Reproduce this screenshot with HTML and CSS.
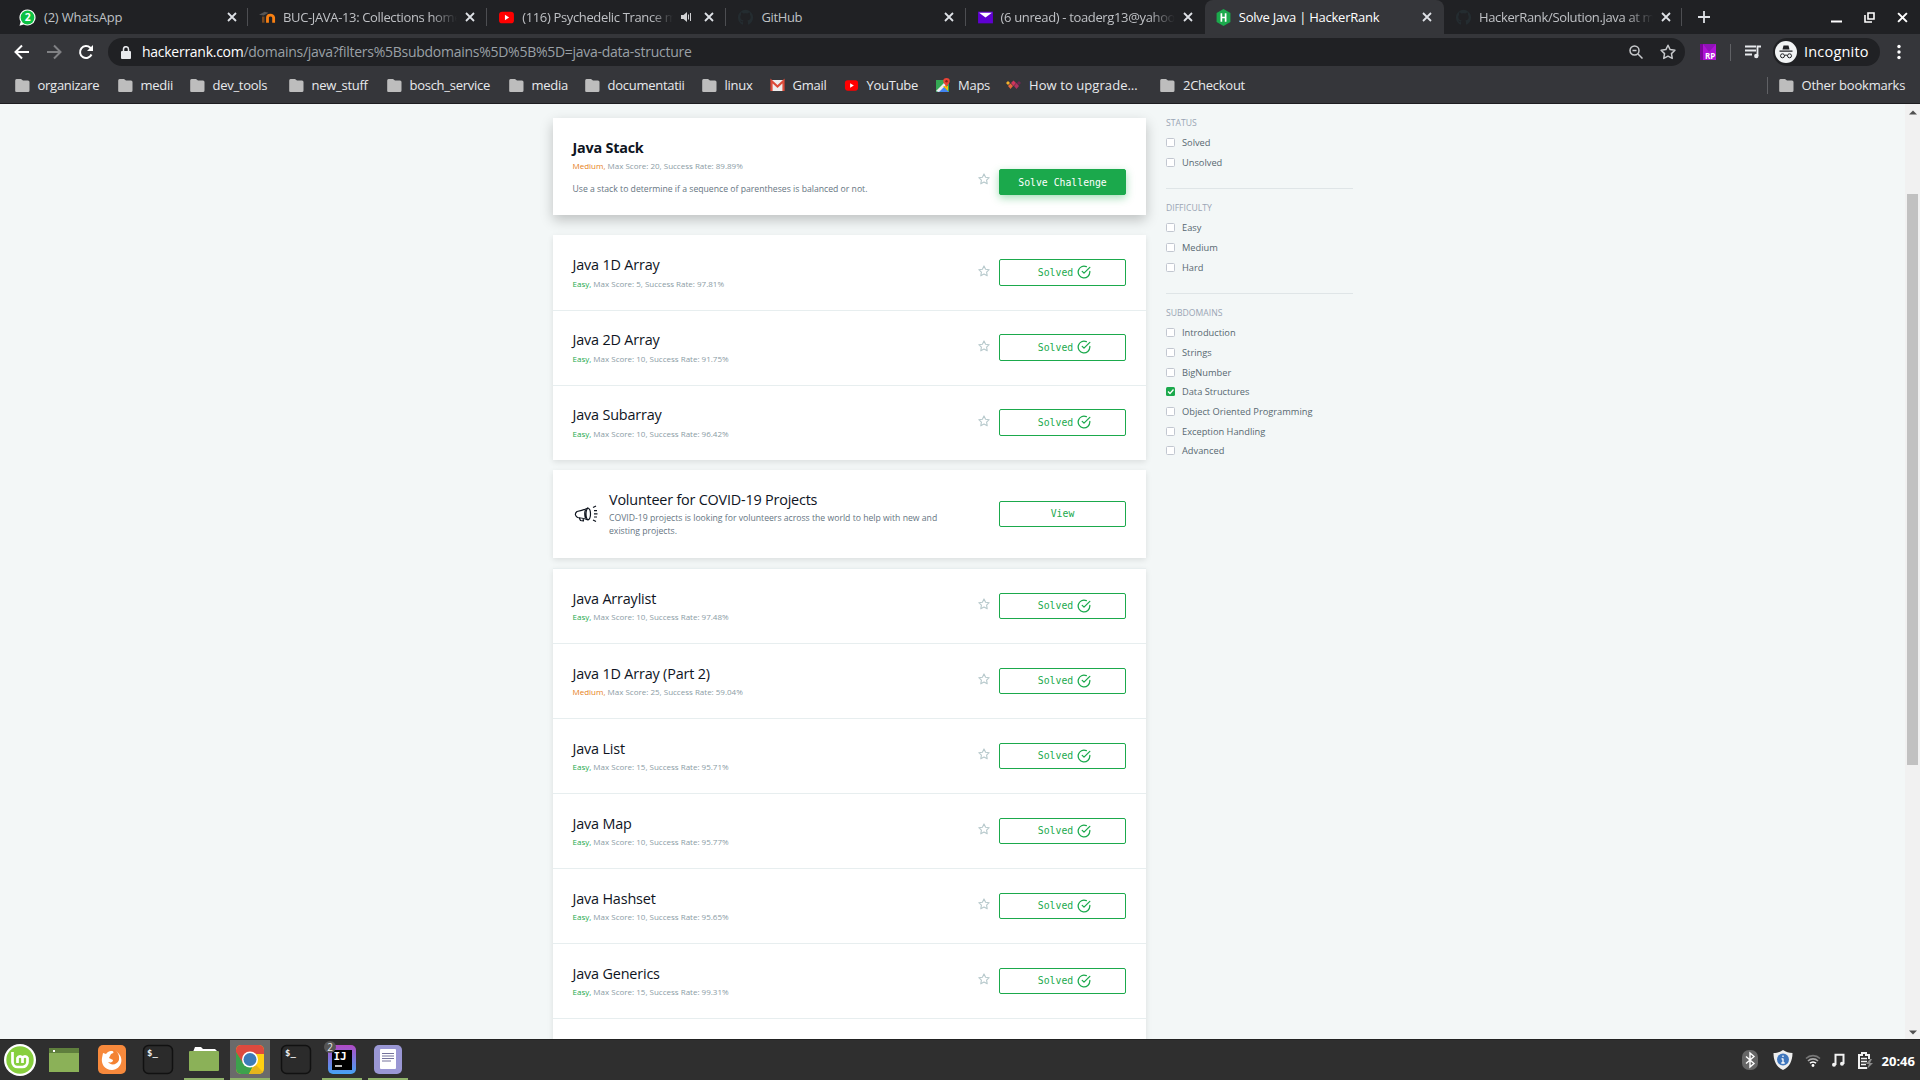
FILE: index.html
```
<!DOCTYPE html>
<html lang="en">
<head>
<meta charset="utf-8">
<title>Solve Java | HackerRank</title>
<link rel="stylesheet" href="styles.css">
</head>
<body>
<svg class="defs" width="0" height="0" aria-hidden="true">
  <symbol id="close" viewBox="0 0 10 10"><path d="M1 1l8 8M9 1l-8 8" fill="none" stroke="currentColor" stroke-width="1.8"/></symbol>
  <symbol id="folder" viewBox="0 0 15 15"><path d="M1.500 1h4.500l2 1.500h5a1.500 1.500 0 0 1 1.500 1.500v8.500a1.500 1.500 0 0 1-1.500 1.500h-11.500a1.300 1.300 0 0 1-1.300-1.500v-10a1.500 1.500 0 0 1 1.300-1.500z" fill="#bdbdbd"/></symbol>
  <symbol id="youtube" viewBox="0 0 16 16"><rect x="1" y="2.500" width="14" height="11" rx="3" fill="#f00"/><path d="M6.500 5.500v5l4-2.500z" fill="#fff"/></symbol>
  <symbol id="github" viewBox="0 0 16 16"><path d="M8 .8a7.200 7.200 0 0 0-2.300 14v-2.500c-2 .4-2.400-.8-2.800-1.500 1.100 0 1.600 1.400 2.900 1 .1-.5.300-.8.500-1-2-.3-3.200-1.200-3.200-3.500 0-.9.300-1.500.8-2-.2-.7-.1-1.400.1-2 .8 0 1.500.5 2 .9a7 7 0 0 1 4 0c.5-.4 1.200-.9 2-.9.200.6.300 1.300.1 2 .5.500.8 1.100.8 2 0 2.300-1.200 3.200-3.200 3.500.4.400.6 1 .6 1.800v2.200a7.200 7.200 0 0 0-2.300-14z" fill="#242c30"/></symbol>
  <symbol id="star" viewBox="0 0 12 12"><path d="M6 .9l1.600 3.300 3.600.5-2.600 2.500.6 3.600-3.200-1.700-3.200 1.700.6-3.600-2.600-2.500 3.600-.5z" fill="none" stroke="currentColor" stroke-width="1.100" stroke-linejoin="round"/></symbol>
  <symbol id="check" viewBox="0 0 24 24"><path d="M22 11v1a10 10 0 1 1-6-9.100M22 4L12 14l-3-3" fill="none" stroke="currentColor" stroke-width="2.200" stroke-linecap="round" stroke-linejoin="round"/></symbol>
</svg>

<header class="browser">
  <div class="tabs">
    <div class="tab tab-first"><svg class="fav" viewBox="0 0 18 18"><path d="M9 .5a8.500 8.500 0 1 1-4 16l-4.500 1.200 1.300-4.200A8.500 8.500 0 0 1 9 .5z" fill="#fff"/><circle cx="9" cy="9" r="7.300" fill="#0dc143"/><text x="9" y="13" text-anchor="middle" class="fav-num">2</text></svg><span class="name">(2) WhatsApp</span><svg class="x"><use href="#close"/></svg></div>
    <div class="tab"><svg class="fav" viewBox="0 0 18 18"><path d="M4.500 14.500V8" fill="none" stroke="#7a4a20" stroke-width="2.600"/><path d="M9 14.500V9q0-2.500 3-2.500T15.500 9v5.500" fill="none" stroke="#f98012" stroke-width="3"/><path d="M0 6l6-3 4 1-5 3z" fill="#555"/></svg><span class="name fade">BUC-JAVA-13: Collections homework</span><svg class="x"><use href="#close"/></svg></div>
    <div class="tab"><svg class="fav"><use href="#youtube"/></svg><span class="name fade">(116) Psychedelic Trance mix</span><svg class="sound" viewBox="0 0 12 12"><path d="M0 4h2.500L6 1v10L2.500 8H0z" fill="#d0d1d3"/><path d="M7.500 3.500v5M9.500 2v8" stroke="#d0d1d3"/></svg><svg class="x"><use href="#close"/></svg></div>
    <div class="tab"><svg class="fav"><use href="#github"/></svg><span class="name">GitHub</span><svg class="x"><use href="#close"/></svg></div>
    <div class="tab"><svg class="fav" viewBox="0 0 16 16"><path d="M1 2.500h14v11H1z" fill="#5f01d1"/><path d="M2 3.500h12L8 8z" fill="#fff"/></svg><span class="name fade">(6 unread) - toaderg13@yahoo.com</span><svg class="x"><use href="#close"/></svg></div>
    <div class="tab active"><svg class="fav" viewBox="0 0 16 16"><path d="M8 0l6.500 3.700v8.600L8 16l-6.500-3.700V3.700z" fill="#1ba94c"/><path d="M6 4v8M10 4v8M6 8h4" stroke="#fff" stroke-width="1.600"/></svg><span class="name">Solve Java | HackerRank</span><svg class="x"><use href="#close"/></svg></div>
    <div class="tab last"><svg class="fav"><use href="#github"/></svg><span class="name fade">HackerRank/Solution.java at master</span><svg class="x"><use href="#close"/></svg></div>
    <svg class="plus" viewBox="0 0 12 12"><path d="M6 0v12M0 6h12" stroke="#dee1e6" stroke-width="1.800"/></svg>
    <div class="window-buttons">
      <svg viewBox="0 0 11 11"><path d="M0 9.500h11" stroke="#fff" stroke-width="2"/></svg>
      <svg viewBox="0 0 11 11"><path d="M4 1h6v6H4zM1 3v7h7" fill="none" stroke="#fff" stroke-width="1.600"/></svg>
      <svg viewBox="0 0 10 10"><use href="#close"/></svg>
    </div>
  </div>
  <div class="toolbar">
    <svg class="nav" viewBox="0 0 16 16"><path d="M15 8H2M8 1.500L1.500 8 8 14.500" fill="none" stroke="#fff" stroke-width="2"/></svg>
    <svg class="nav" viewBox="0 0 16 16"><path d="M1 8h13M8 1.500L14.500 8 8 14.500" fill="none" stroke="#808184" stroke-width="2"/></svg>
    <svg class="nav" viewBox="0 0 16 16"><path d="M13.500 10.500A6 6 0 1 1 12.300 3.800L14 5.500" fill="none" stroke="#fff" stroke-width="2"/><path d="M15 1v6H9z" fill="#fff"/></svg>
    <div class="omnibox">
      <svg class="lock" viewBox="0 0 10 13"><path d="M1 5h8a1 1 0 0 1 1 1v6a1 1 0 0 1-1 1H1a1 1 0 0 1-1-1V6a1 1 0 0 1 1-1z" fill="#e8eaed"/><path d="M2.500 5V3.200a2.500 2.500 0 0 1 5 0V5" fill="none" stroke="#e8eaed" stroke-width="1.500"/></svg>
      <span class="url"><b>hackerrank.com</b>/domains/java?filters%5Bsubdomains%5D%5B%5D=java-data-structure</span>
      <svg class="lens" viewBox="0 0 14 14"><circle cx="5.500" cy="5.500" r="4.500" fill="none" stroke="#c8cacd" stroke-width="1.500"/><path d="M9 9l4.500 4.500M3.500 5.500h4" stroke="#c8cacd" stroke-width="1.500"/></svg>
      <svg class="bookmark"><use href="#star"/></svg>
    </div>
    <svg class="rp" viewBox="0 0 16 16"><path d="M0 0h16v16H0z" fill="#b012d6"/><path d="M0 0h3v16H0z" fill="#7a0699"/><path d="M3 0h13L9 8z" fill="#9013b8"/><text x="5" y="14.500" class="rp-text">RP</text></svg>
    <i class="bar"></i>
    <svg class="queue" viewBox="0 0 16 14"><path d="M0 1.500h11M0 5.500h11M0 9.500h7M12.500 11V1.500H16" fill="none" stroke="#e8eaed" stroke-width="1.800"/><circle cx="11.300" cy="11" r="2.200" fill="#e8eaed"/></svg>
    <div class="incognito"><svg viewBox="0 0 22 22"><circle cx="11" cy="11" r="11" fill="#f1f3f4"/><path d="M7.500 8.500l1-4h5l1 4zM4.500 9.500h13v1.200h-13z" fill="#202124"/><path d="M9.500 14.500q1.500-1 3 0" fill="none" stroke="#202124"/><circle cx="7.500" cy="14.800" r="2" fill="none" stroke="#202124"/><circle cx="14.500" cy="14.800" r="2" fill="none" stroke="#202124"/></svg><span>Incognito</span></div>
    <svg class="dots" viewBox="0 0 4 16"><circle cx="2" cy="2.500" r="1.700"/><circle cx="2" cy="8" r="1.700"/><circle cx="2" cy="13.500" r="1.700"/></svg>
  </div>
  <nav class="bookmarks">
    <span class="bm b1"><svg><use href="#folder"/></svg>organizare</span>
    <span class="bm b2"><svg><use href="#folder"/></svg>medii</span>
    <span class="bm b3"><svg><use href="#folder"/></svg>dev_tools</span>
    <span class="bm b4"><svg><use href="#folder"/></svg>new_stuff</span>
    <span class="bm b5"><svg><use href="#folder"/></svg>bosch_service</span>
    <span class="bm b6"><svg><use href="#folder"/></svg>media</span>
    <span class="bm b7"><svg><use href="#folder"/></svg>documentatii</span>
    <span class="bm b8"><svg><use href="#folder"/></svg>linux</span>
    <span class="bm b9"><svg viewBox="0 0 15 15"><path d="M1 2h13v11H1z" fill="#eee"/><path d="M1.500 13V3l6 5.500L13.500 3v10" fill="none" stroke="#dd4b39" stroke-width="2.200"/></svg>Gmail</span>
    <span class="bm b10"><svg><use href="#youtube"/></svg>YouTube</span>
    <span class="bm b11"><svg viewBox="0 0 15 15"><path d="M1 2h13v12H1z" fill="#34a853"/><path d="M2 14l6-6 6 6z" fill="#4285f4"/><path d="M1 13L12 2l2 2L4 14z" fill="#eee"/><path d="M8 8l5 5V8z" fill="#fbbc04"/><path d="M11.500 0a3.300 3.300 0 0 1 3.300 3.300c0 2-2.300 3-3.300 6-1-3-3.300-4-3.300-6A3.300 3.300 0 0 1 11.500 0z" fill="#ea4335"/><circle cx="11.500" cy="3.300" r="1.200" fill="#8b1e16"/></svg>Maps</span>
    <span class="bm b12"><svg viewBox="0 0 15 15"><path d="M0 5l2-2 2 2-2 2z" fill="#f4b02a"/><path d="M2 8l2.500-2.500L7 8l-2.500 3z" fill="#e9663a"/><path d="M5 5l2.500-2.500L10 5 7.500 8z" fill="#d3345c"/><path d="M8 8l2.500-3L13 8l-2.500 3z" fill="#b0315f"/><path d="M11 5l2-2 2 2-2 2z" fill="#702552"/></svg>How to upgrade…</span>
    <span class="bm b13"><svg><use href="#folder"/></svg>2Checkout</span>
    <i class="bar"></i>
    <span class="bm b14"><svg><use href="#folder"/></svg>Other bookmarks</span>
  </nav>
</header>

<div class="viewport">
<div class="page">
  <main class="challenges">
    <article class="card featured">
      <div class="info"><h2>Java Stack</h2><p class="meta"><em class="medium">Medium,</em> Max Score: 20, Success Rate: 89.89%</p><p class="desc">Use a stack to determine if a sequence of parentheses is balanced or not.</p></div>
      <svg class="star"><use href="#star"/></svg><a class="btn primary">Solve Challenge</a>
    </article>
    <section class="card list first">
      <article class="row"><div class="info"><h3>Java 1D Array</h3><p class="meta"><em>Easy,</em> Max Score: 5, Success Rate: 97.81%</p></div><svg class="star"><use href="#star"/></svg><a class="btn">Solved<svg><use href="#check"/></svg></a></article>
      <article class="row"><div class="info"><h3>Java 2D Array</h3><p class="meta"><em>Easy,</em> Max Score: 10, Success Rate: 91.75%</p></div><svg class="star"><use href="#star"/></svg><a class="btn">Solved<svg><use href="#check"/></svg></a></article>
      <article class="row"><div class="info"><h3>Java Subarray</h3><p class="meta"><em>Easy,</em> Max Score: 10, Success Rate: 96.42%</p></div><svg class="star"><use href="#star"/></svg><a class="btn">Solved<svg><use href="#check"/></svg></a></article>
    </section>
    <article class="card volunteer">
      <svg class="horn" viewBox="0 0 24 20"><path d="M3 7.500Q8 6.800 14 4q2.500 1 2.500 6T14 16q-4-2-10.500-2.500Q-.5 10.500 3 7.500zM11.500 5.500q-1.500 4.500 0 9M5 13.500l1.500 3 3 .5-.5-3M14 4q-2 1.500-2 6t2 6" fill="none" stroke="#0e141e" stroke-width="1.200" stroke-linejoin="round"/><path d="M19 3.500l3-1.500M20 6.700h3M20 9.900h3.500M20 13h3M19 16l3 1.500" stroke="#0e141e" stroke-width="1.200"/></svg>
      <div class="info"><h3>Volunteer for COVID-19 Projects</h3><p class="desc">COVID-19 projects is looking for volunteers across the world to help with new and<br>existing projects.</p></div>
      <a class="btn">View</a>
    </article>
    <section class="card list second">
      <article class="row"><div class="info"><h3>Java Arraylist</h3><p class="meta"><em>Easy,</em> Max Score: 10, Success Rate: 97.48%</p></div><svg class="star"><use href="#star"/></svg><a class="btn">Solved<svg><use href="#check"/></svg></a></article>
      <article class="row"><div class="info"><h3>Java 1D Array (Part 2)</h3><p class="meta"><em class="medium">Medium,</em> Max Score: 25, Success Rate: 59.04%</p></div><svg class="star"><use href="#star"/></svg><a class="btn">Solved<svg><use href="#check"/></svg></a></article>
      <article class="row"><div class="info"><h3>Java List</h3><p class="meta"><em>Easy,</em> Max Score: 15, Success Rate: 95.71%</p></div><svg class="star"><use href="#star"/></svg><a class="btn">Solved<svg><use href="#check"/></svg></a></article>
      <article class="row"><div class="info"><h3>Java Map</h3><p class="meta"><em>Easy,</em> Max Score: 10, Success Rate: 95.77%</p></div><svg class="star"><use href="#star"/></svg><a class="btn">Solved<svg><use href="#check"/></svg></a></article>
      <article class="row"><div class="info"><h3>Java Hashset</h3><p class="meta"><em>Easy,</em> Max Score: 10, Success Rate: 95.65%</p></div><svg class="star"><use href="#star"/></svg><a class="btn">Solved<svg><use href="#check"/></svg></a></article>
      <article class="row"><div class="info"><h3>Java Generics</h3><p class="meta"><em>Easy,</em> Max Score: 15, Success Rate: 99.31%</p></div><svg class="star"><use href="#star"/></svg><a class="btn">Solved<svg><use href="#check"/></svg></a></article>
      <article class="row"></article>
    </section>
  </main>
  <aside class="filters">
    <section><h4>STATUS</h4><label><i></i>Solved</label><label><i></i>Unsolved</label></section>
    <section><h4>DIFFICULTY</h4><label><i></i>Easy</label><label><i></i>Medium</label><label><i></i>Hard</label></section>
    <section><h4>SUBDOMAINS</h4><label><i></i>Introduction</label><label><i></i>Strings</label><label><i></i>BigNumber</label><label><i class="on"><svg viewBox="0 0 9 9"><path d="M2 4.500l2 2 3.500-4" fill="none" stroke="#fff" stroke-width="1.300"/></svg></i>Data Structures</label><label><i></i>Object Oriented Programming</label><label><i></i>Exception Handling</label><label><i></i>Advanced</label></section>
  </aside>
</div>
<div class="scrollbar"><svg viewBox="0 0 8 5"><path d="M0 4.500L4 .5l4 4z" fill="#505050"/></svg><div class="thumb"></div><svg viewBox="0 0 8 5"><path d="M0 .5l4 4 4-4z" fill="#505050"/></svg></div>
</div>

<footer class="taskbar">
  <div class="app a1"><svg viewBox="0 0 32 32"><circle cx="16" cy="16" r="16" fill="#fff"/><circle cx="16" cy="16" r="13.700" fill="#87cf3e"/><path d="M8.500 8v10a5 5 0 0 0 5 5h5a5 5 0 0 0 5-5v-4a2.700 2.700 0 0 0-5 0v5M18.500 14a2.700 2.700 0 0 0-5 0v5" fill="none" stroke="#fff" stroke-width="2.700"/></svg></div>
  <div class="app a2"><svg viewBox="0 0 32 32"><path d="M1 4h30v24H1z" fill="#8bb158"/><path d="M1 4h30v5H1z" fill="#5f7f3d"/><path d="M5 6h2v2H5z" fill="#fff"/></svg></div>
  <div class="app a3"><svg viewBox="0 0 32 32"><rect x="2" y="1" width="28" height="29" rx="5" fill="#f7893c"/><path d="M7 9l3 1c3-4 9-4 12-1 6 5 4 16-6 17-8 0-11-7-10-12z" fill="#fff"/><path d="M14 6c6-1 10 4 9 10-2 5-8 6-11 2 3 1 5 0 5-2l-4-2 2-4c4-1 3-3-1-4z" fill="#f48232"/></svg></div>
  <div class="app a4"><svg viewBox="0 0 32 32"><rect x="1.500" y="1.500" width="29" height="28" rx="5" fill="#2b2b2b" stroke="#111" stroke-width="1.500"/><text x="5" y="12" class="prompt">$_</text></svg></div>
  <div class="app a5 open"><svg viewBox="0 0 32 32"><path d="M5 8l2-5h6l2 2h12l2 2v6H5z" fill="#fff"/><rect x="1" y="7" width="30" height="20" rx="1" fill="#8bb158"/></svg></div>
  <div class="app a6 open current"><svg viewBox="0 0 32 32"><defs><clipPath id="tile"><rect x="2" y="1" width="28" height="29" rx="5"/></clipPath></defs><g clip-path="url(#tile)"><path d="M0 0h32v32H0z" fill="#ffcf12"/><path d="M2 0h30v10H16l-7 10L0 6z" fill="#dd4a3e"/><path d="M0 5l9 14 10 3-5 10H0z" fill="#3da14c"/><path d="M15 30l6-10 10 10z" fill="#e5b51c"/></g><circle cx="16" cy="15.500" r="8" fill="#fff"/><circle cx="16" cy="15.500" r="6.500" fill="#3d7cb8"/></svg></div>
  <div class="app a7"><svg viewBox="0 0 32 32"><rect x="1.500" y="1.500" width="29" height="28" rx="5" fill="#2b2b2b" stroke="#111" stroke-width="1.500"/><text x="5" y="12" class="prompt">$_</text></svg></div>
  <div class="app a8 open"><svg viewBox="0 0 32 32"><defs><linearGradient id="ij" x2="0" y2="1"><stop stop-color="#b14ac4"/><stop offset="1" stop-color="#45a3f5"/></linearGradient></defs><rect x="2" y="1" width="28" height="29" rx="5" fill="url(#ij)"/><path d="M6 6h20v20H6z" fill="#000"/><text x="7.500" y="16" class="ij">IJ</text><path d="M9 22h7" stroke="#fff" stroke-width="1.500"/></svg><b class="badge">2</b></div>
  <div class="app a9 open"><svg viewBox="0 0 32 32"><rect x="2" y="1" width="28" height="29" rx="5" fill="#9a97d4"/><rect x="8" y="5" width="16" height="20" rx="1" fill="#fff"/><path d="M10 9.500h12M10 12h12M10 14.500h12M10 17h9" stroke="#75739c"/></svg></div>
  <div class="tray">
    <svg class="bluetooth" viewBox="0 0 16 20"><rect width="16" height="20" rx="7" fill="#666"/><path d="M4 6.500l8 7-4 3.500V3l4 3.500-8 7" fill="none" stroke="#fff" stroke-width="1.400"/></svg>
    <svg class="shield" viewBox="0 0 20 20"><path d="M10 0c3 2 6 3 9.500 3 0 8-3 14-9.500 17C3.500 17 .5 11 .5 3 4 3 7 2 10 0z" fill="#eee"/><circle cx="10" cy="9.500" r="6" fill="#3f76bd"/><path d="M10 8.500v4.500M10 5.500v1.500M8.500 8.800H10M8.300 13h3.400" stroke="#fff" stroke-width="1.300"/></svg>
    <svg class="wifi" viewBox="0 0 16 14"><path d="M1 5.500a10 10 0 0 1 14 0" fill="none" stroke="#777" stroke-width="1.600"/><path d="M3 8a7 7 0 0 1 10 0" fill="none" stroke="#aaa" stroke-width="1.600"/><path d="M5 10.300a4 4 0 0 1 6 0" fill="none" stroke="#fff" stroke-width="1.600"/><circle cx="8" cy="12.500" r="1.400" fill="#fff"/></svg>
    <svg class="music" viewBox="0 0 14 14"><path d="M4.500 12V1.800h8V11" fill="none" stroke="#f2f2f2" stroke-width="2"/><circle cx="3" cy="11.800" r="2" fill="#f2f2f2"/><circle cx="11" cy="10.800" r="2" fill="#f2f2f2"/></svg>
    <svg class="battery" viewBox="0 0 15 17"><path d="M11 7V3H8V1H4v2H1v13h8" fill="none" stroke="#f2f2f2" stroke-width="2"/><path d="M3 6.500h6M3 9.500h6M3 12.500h5" stroke="#f2f2f2" stroke-width="1.500"/><path d="M12 7l-4 5h3l-2 5 6-6h-3l2-4z" fill="#8a8a8a"/></svg>
    <time>20:46</time>
  </div>
</footer>
</body>
</html>
```
FILE: styles.css
```
* { box-sizing: border-box; }
body { margin: 0; width: 1920px; height: 1080px; overflow: hidden; display: flex; flex-direction: column; font-family: "Open Sans", sans-serif; background: #f3f7f7; }
h2, h3, h4, p { margin: 0; }
svg { display: block; flex: none; }
.defs { position: absolute; }

.browser { height: 104px; background: #35363a; border-bottom: 1px solid #1d1d20; font-family: "Open Sans", sans-serif; color: #e8eaed; flex: none; }
.tabs { height: 34px; background: #202124; display: flex; }
.tab { width: 239.200px; height: 34px; flex: none; display: flex; align-items: center; padding: 0 12px 0 11px; color: #bfc1c5; font-size: 13px; letter-spacing: -.35px; background: linear-gradient(#4d4e52, #4d4e52) right 8px / 1px 18px no-repeat; }
.tab-first { width: 248px; padding: 0 11px 0 19px; letter-spacing: -.2px; }
.tab:nth-child(5), .tab.last { background-image: none; }
.tab.active { background: #35363a; color: #fff; border-radius: 8px 8px 0 0; letter-spacing: -.25px; }
.tab.last { width: 238px; padding-right: 11px; background: linear-gradient(#4d4e52, #4d4e52) right 8px / 1px 18px no-repeat; }
.fav { width: 17px; height: 17px; margin-right: 7px; }
.tab-first .fav { margin-right: 8px; }
.tab.active .fav { margin-left: -1px; }
.fav-num { font: bold 11px "Open Sans", sans-serif; fill: #fff; }
.name { flex: 1; min-width: 0; white-space: nowrap; overflow: hidden; }
.fade { -webkit-mask-image: linear-gradient(90deg, #000 85%, transparent); mask-image: linear-gradient(90deg, #000 85%, transparent); }
.x { width: 10px; height: 10px; margin-left: 8px; color: #dee1e6; }
.sound { width: 12px; height: 12px; margin: 0 3px 0 8px; }
.plus { width: 12px; height: 12px; margin: 11px 0 0 16px; }
.window-buttons { margin: 12px 12px 0 auto; display: flex; gap: 22px; color: #fff; }
.window-buttons svg { width: 11px; height: 11px; }

.toolbar { height: 36px; display: flex; align-items: center; padding: 0 15px 0 14px; }
.nav { width: 16px; height: 16px; margin-right: 16px; }
.omnibox { width: 1577px; height: 28px; margin-left: -2px; border-radius: 14px; background: #202124; display: flex; align-items: center; padding: 0 9px 0 13px; }
.lock { width: 10px; height: 13px; margin-right: 11px; }
.url { flex: 1; font-size: 14px; line-height: 18px; padding-bottom: 1px; color: #9aa0a6; letter-spacing: -.27px; white-space: nowrap; }
.url b { font-weight: 400; color: #fff; }
.lens { width: 14px; height: 14px; margin-right: 17px; }
.bookmark { width: 16px; height: 16px; color: #c8cacd; }
.rp { width: 16px; height: 16px; margin-left: 15px; }
.rp-text { font: bold 8px "Open Sans", sans-serif; fill: #fff; }
.bar { width: 1px; height: 17px; background: #606165; }
.toolbar .bar { margin: 0 14px; }
.queue { width: 16px; height: 14px; }
.incognito { width: 107px; height: 28px; margin-left: 12px; border-radius: 14px; background: #202124; display: flex; align-items: center; gap: 7px; padding-left: 2px; font-size: 14.500px; letter-spacing: .2px; line-height: 18px; color: #fff; }
.incognito span { padding-bottom: 1px; }
.incognito svg { width: 22px; height: 22px; }
.dots { width: 4px; height: 16px; margin-left: auto; margin-right: 4px; fill: #fff; }

.bookmarks { height: 30px; padding: 0 12px 0 14.500px; display: flex; align-items: center; font-size: 13px; letter-spacing: -.27px; white-space: nowrap; }
.bm { display: flex; align-items: center; gap: 8px; flex: none; }
.bm svg { width: 15px; height: 15px; }
.b1 { width: 103px; } .b2 { width: 72px; } .b3 { width: 99px; } .b4 { width: 98px; } .b5 { width: 122px; }
.b6 { width: 76px; } .b7 { width: 117px; } .b8 { width: 68px; } .b9 { width: 74px; } .b10 { width: 91.500px; }
.b11 { width: 71px; } .b12 { width: 154px; letter-spacing: .08px; } .b13 { width: 606.500px; }
.b14 { margin-left: 11px; letter-spacing: -.2px; }

.viewport { flex: 1; min-height: 0; display: flex; overflow: hidden; }
.page { flex: 1; min-width: 0; padding: 14px 0 0 553px; display: flex; gap: 20px; background: #f3f7f7; }
.challenges { width: 593px; flex: none; }
.card { background: #fff; box-shadow: 0 2px 6px rgba(0, 0, 0, .1); display: flex; }
.info { flex: 1; min-width: 0; }
.featured { height: 97px; padding: 20px 20px 0 19.500px; box-shadow: 0 5px 12px rgba(0, 0, 0, .22); }
h2 { font-size: 14.400px; line-height: 20px; color: #0e141e; letter-spacing: -.22px; }
h3 { font-size: 14.400px; line-height: 20px; font-weight: 400; color: #0e141e; letter-spacing: -.17px; }
.meta { font-size: 8px; line-height: 12px; margin-top: 2px; color: #8b9ca5; white-space: nowrap; }
.meta em { font-style: normal; color: #1ba94c; }
.meta em.medium { color: #e67f22; }
.desc { font-size: 8.660px; line-height: 13px; color: #667582; white-space: nowrap; }
.featured .desc { margin-top: 11px; }
.star { width: 12px; height: 12px; margin: 30px 9px 0 0; color: #b7c9cc; }
.featured .star { margin-top: 35px; }
.btn { width: 127px; height: 27px; border: 1px solid #1ba94c; border-radius: 2px; color: #1ba94c; display: flex; align-items: center; justify-content: center; gap: 4px; font: 9.800px "DejaVu Sans Mono", monospace; white-space: nowrap; }
.btn svg { width: 14px; height: 14px; }
.btn.primary { background: #1ba94c; color: #fff; height: 26px; margin-top: 31px; box-shadow: 0 3px 8px rgba(27, 169, 76, .4); }
.list { margin-top: 20px; flex-direction: column; }
.row { height: 75px; padding: 20px 20px 0 19.500px; display: flex; flex: none; border-top: 1px solid #e7eeef; }
.first .row { padding-top: 19px; }
.first .row:first-child { border-top-color: #fff; }
.row .btn { margin-top: 4px; height: 26px; padding: 0 0 1px 4px; }
.first .row .btn { height: 27px; }
.row .star { margin-top: 9px; }
.first .star { margin-top: 10px; }
.first .meta { margin-top: 3px; }
.volunteer { margin-top: 10px; height: 88px; padding: 20px 20px 0; }
.horn { width: 24px; height: 20px; margin: 14px 11px 0 1px; }
.volunteer .desc { padding-top: 2px; }
.volunteer h3 { letter-spacing: -.2px; }
.volunteer .btn { margin-top: 11px; height: 26px; padding-bottom: 1px; }
.second { margin-top: 10px; }

.filters { width: 187px; color: #576871; }
.filters section { border-bottom: 1px solid #dfe5e7; height: 71px; margin-top: -1px; }
.filters section:nth-child(2) { height: 105px; padding-top: 14px; margin-top: 0; }
.filters section:nth-child(3) { border: 0; padding-top: 13px; height: auto; margin-top: 0; }
.filters section:first-child { height: 72px; }
.filters section:nth-child(2) { padding-top: 13px; }
h4 { font-size: 8.640px; line-height: 12px; margin-bottom: 4px; font-weight: 400; color: #9aa5b5; }
.filters label { display: flex; align-items: center; height: 19.650px; gap: 7px; font-size: 9.270px; }
.filters label i { width: 9px; height: 9px; border: 1px solid #c2c7d0; border-radius: 1.500px; background: #fff; }
.filters label i.on { background: #1ba94c; border: 0; }
.scrollbar { width: 15px; flex: none; background: #f1f1f1; display: flex; flex-direction: column; align-items: center; padding: 6px 0 4px; }
.scrollbar svg { width: 8px; height: 5px; }
.thumb { width: 11px; height: 571px; margin: 79px 0 auto; background: #c1c1c1; }

.taskbar { height: 41px; flex: none; background: #2f2f2f; border-top: 1px solid #222; display: flex; }
.app { width: 40px; height: 40px; margin-right: 6px; flex: none; position: relative; display: flex; justify-content: center; padding-top: 4px; }
.app svg { width: 32px; height: 32px; }
.a1 { width: 40px; margin-right: 4px; }
.a2 { margin-right: 8px; }
.open { border-bottom: 2px solid #8fb26a; }
.current { background: #6a6a6a; }
.prompt { font: bold 9px "DejaVu Sans Mono", monospace; fill: #eee; }
.ij { font: bold 11px "DejaVu Sans Mono", monospace; fill: #fff; }
.badge { position: absolute; left: 2px; top: 1px; width: 12px; height: 12px; border-radius: 6px; background: #555; color: #e8e8e8; font-size: 10px; line-height: 12px; text-align: center; font-weight: 400; }
.tray { margin-left: auto; display: flex; align-items: center; padding-right: 5px; }
.bluetooth { width: 16px; height: 20px; margin-right: 15px; }
.shield { width: 20px; height: 20px; margin-right: 12px; }
.wifi { width: 16px; height: 14px; margin-right: 10px; }
.music { width: 14px; height: 14px; margin-right: 13px; }
.battery { width: 15px; height: 17px; margin-right: 9px; }
.tray time { font-size: 13px; font-weight: 700; color: #fff; padding-top: 1px; }
```
